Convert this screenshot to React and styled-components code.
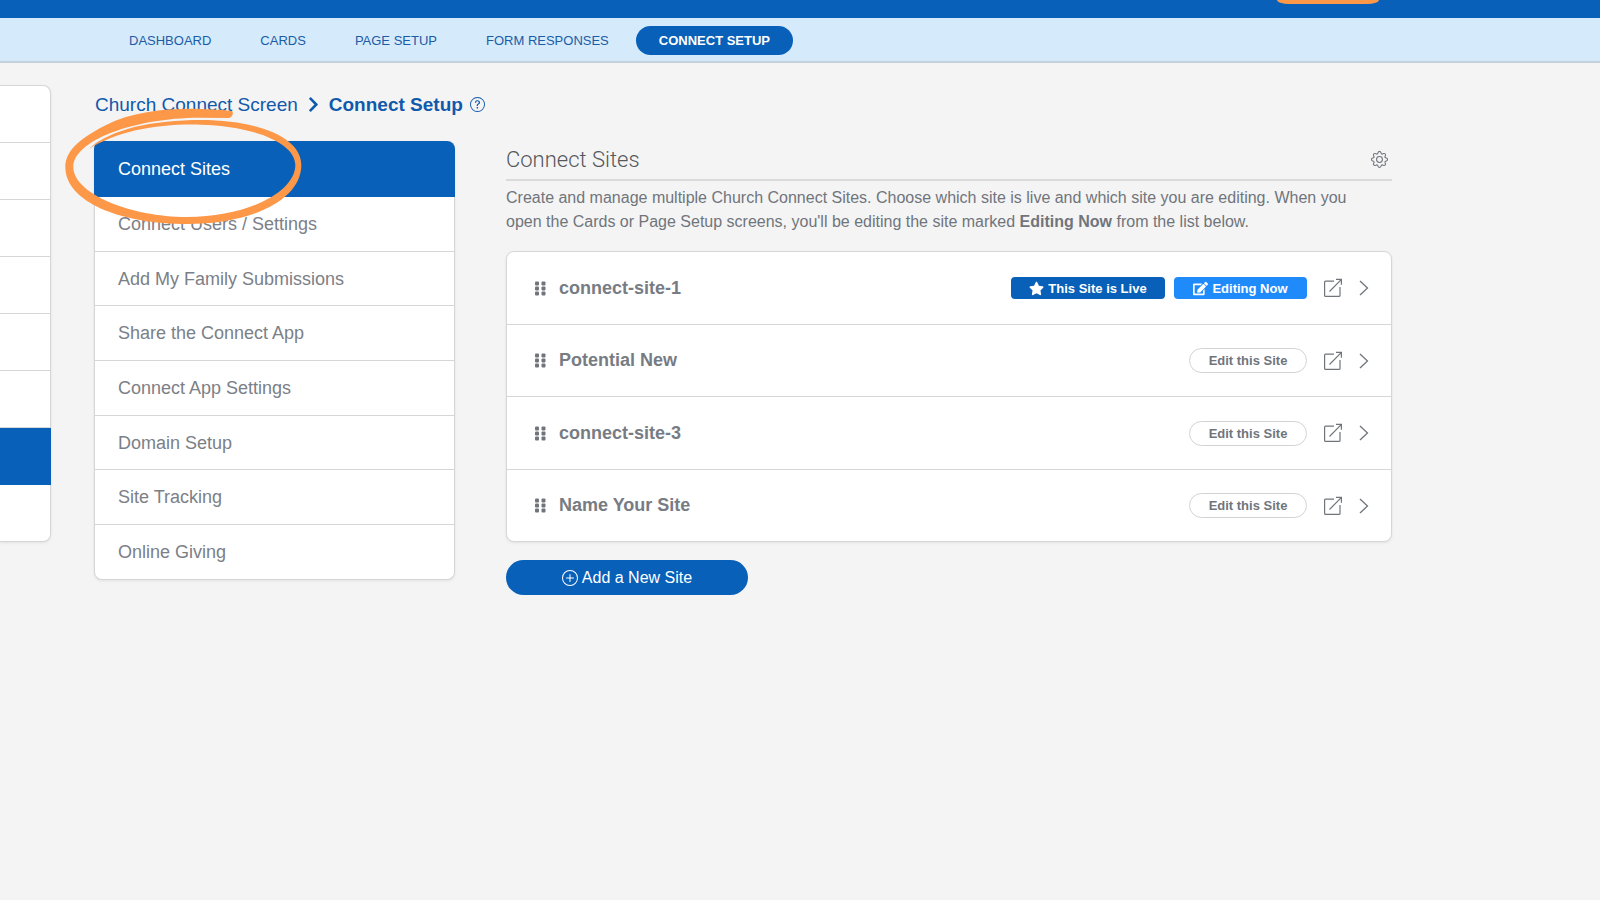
import React from 'react';
import styled, { createGlobalStyle } from 'styled-components';
import { FaStar, FaEdit, FaChevronRight } from 'react-icons/fa';
import { BsGear, BsPlusCircle, BsQuestionCircle } from 'react-icons/bs';

const navLinks = ['Dashboard', 'Cards', 'Page Setup', 'Form Responses', 'Connect Setup'];

const menuItems = [
    'Connect Sites',
    'Connect Users / Settings',
    'Add My Family Submissions',
    'Share the Connect App',
    'Connect App Settings',
    'Domain Setup',
    'Site Tracking',
    'Online Giving',
];

const sites = [
    { name: 'connect-site-1', live: true, editing: true },
    { name: 'Potential New' },
    { name: 'connect-site-3' },
    { name: 'Name Your Site' },
];

const RAIL_ROWS = 8;
const RAIL_ACTIVE = 6;

const GripIcon = () => (
    <svg width="11" height="15" viewBox="0 0 11 15" fill="currentColor" aria-hidden="true">
        {[0, 5, 10].map(y => (
            <React.Fragment key={y}>
                <rect x="0" y={y + 0.5} width="4" height="4" rx="1" />
                <rect x="6.5" y={y + 0.5} width="4" height="4" rx="1" />
            </React.Fragment>
        ))}
    </svg>
)

const OpenIcon = () => (
    <svg width="20" height="20" viewBox="0 0 20 20" fill="none" stroke="currentColor" strokeWidth="1.2" aria-hidden="true">
        <path d="M11 3.2H2.6a1 1 0 0 0-1 1v13.2a1 1 0 0 0 1 1H16a1 1 0 0 0 1-1V9" />
        <path d="M6.5 13.5L18.2 1.6M13 1.4h5.4v5.4" />
    </svg>
)

const ArrowIcon = () => (
    <svg width="10" height="16" viewBox="0 0 10 16" fill="none" stroke="currentColor" strokeWidth="1.3" aria-hidden="true">
        <path d="M1 1l7.5 7L1 15" />
    </svg>
)

const Marker = () => (
    <MarkerSvg viewBox="0 0 720 360" aria-hidden="true">
        <path d="M503 12C400 2 240 -4 122 56C40 98 4 135 4 180C4 285 170 351 369 351C560 351 712 280 712 174C712 90 580 39 410 39C270 39 140 65 75 126C160 72 280 50 410 53C560 56 694 105 694 174C694 255 550 330 369 330C200 330 28 260 28 180C28 100 210 33 405 32L495 33C508 31 509 14 503 12Z" />
    </MarkerSvg>
)

const SiteRow = ({ site }) => (
    <Row>
        <Grip aria-label={`Move ${site.name}`}><GripIcon /></Grip>
        <SiteName>{site.name}</SiteName>
        {site.live && <Badge $color="#0860b8" $width={154}><FaStar size={15} />This Site is Live</Badge>}
        {site.editing
            ? <Badge $color="#1f8bfb" $width={133}><FaEdit size={15} />Editing Now</Badge>
            : <EditButton>Edit this Site</EditButton>
        }
        <RowLink href="#open" aria-label={`Open ${site.name}`}><OpenIcon /></RowLink>
        <RowLink href="#details" aria-label={`${site.name} details`}><ArrowIcon /></RowLink>
    </Row>
)

const App = () => {
    return(
        <>
            <GlobalStyle />
            <TopBar><TopTab /></TopBar>
            <Nav>
                {navLinks.map(e => (
                    <NavLink key={e} href="#" $active={e === 'Connect Setup'}>{e}</NavLink>
                ))}
            </Nav>
            <Page>
                <Rail>
                    {Array.from({ length: RAIL_ROWS }, (_, i) => (
                        <RailRow key={i} $active={i === RAIL_ACTIVE} />
                    ))}
                </Rail>
                <Content>
                    <Breadcrumb>
                        <a href="#church">Church Connect Screen</a>
                        <FaChevronRight size={17} />
                        <strong>Connect Setup</strong>
                        <HelpButton aria-label="Help"><BsQuestionCircle size={15} /></HelpButton>
                    </Breadcrumb>
                    <Columns>
                        <Menu>
                            {menuItems.map((e, i) => (
                                <MenuItem key={e} href="#" $active={i === 0}>{e}</MenuItem>
                            ))}
                            <Marker />
                        </Menu>
                        <Main>
                            <Heading>
                                <h1>Connect Sites</h1>
                                <GearButton aria-label="Settings"><BsGear size={17} /></GearButton>
                            </Heading>
                            <Description>
                                Create and manage multiple Church Connect Sites. Choose which site is live and which site you are editing. When you open the Cards or Page Setup screens, you'll be editing the site marked <strong>Editing Now</strong> from the list below.
                            </Description>
                            <SiteList>
                                {sites.map(e => <SiteRow key={e.name} site={e} />)}
                            </SiteList>
                            <AddButton><BsPlusCircle size={16} />Add a New Site</AddButton>
                        </Main>
                    </Columns>
                </Content>
            </Page>
        </>
    )
}

const GlobalStyle = createGlobalStyle`
    * {
        box-sizing: border-box;
    }
    body {
        margin: 0;
        background-color: #f4f4f4;
        color: #70757c;
        font-family: "Liberation Sans", Arial, sans-serif;
        font-size: 16px;
    }
    a {
        color: inherit;
        text-decoration: none;
    }
    button {
        font-family: inherit;
        color: inherit;
        background: none;
        border: 0;
        padding: 0;
        cursor: pointer;
    }
`

const TopBar = styled.header`
    height: 18px;
    background-color: #0860b8;
    display: flex;
    justify-content: flex-end;
    padding-right: 221px;
`

const TopTab = styled.div`
    width: 102px;
    height: 4px;
    background-color: #fd9848;
    border-radius: 0 0 12px 12px / 0 0 4px 4px;
`

const Nav = styled.nav`
    display: flex;
    align-items: center;
    gap: 5px;
    height: 45px;
    padding: 1px 0 0 107px;
    background-color: #d5eafb;
    border-bottom: 2px solid #c3d1dc;
`

const NavLink = styled.a`
    padding: 1px ${props => props.$active ? 23 : 22}px 0;
    line-height: 28px;
    border-radius: 15px;
    font-size: 13px;
    text-transform: uppercase;
    font-weight: ${props => props.$active ? 700 : 400};
    color: ${props => props.$active ? '#fff' : '#1c5ca6'};
    background-color: ${props => props.$active ? '#0860b8' : 'transparent'};
`

const Page = styled.div`
    display: flex;
    align-items: flex-start;
    gap: 43px;
    padding: 22px 13% 40px 0;
`

const Rail = styled.aside`
    flex: none;
    width: 51px;
    background-color: #fff;
    border: 1px solid #d5d6d8;
    border-left: 0;
    border-radius: 0 8px 8px 0;
    box-shadow: 0 1px 3px rgba(0,0,0,.08);
`

const RailRow = styled.div`
    height: 57px;
    border-bottom: 1px solid #d5d6d8;

    ${props => props.$active && `
        margin-right: -1px;
        border-color: #0860b8;
        background-color: #0860b8;
    `}

    &:last-child {
        border-bottom: 0;
        height: 56px;
    }
`

const Content = styled.div`
    flex: 1;
    min-width: 0;
    padding-top: 7px;
`

const Breadcrumb = styled.div`
    display: flex;
    align-items: center;
    gap: 7px;
    height: 25px;
    padding-left: 1px;
    font-size: 19px;
    color: #1159ab;
`

const HelpButton = styled.button`
    display: flex;
`

const Columns = styled.div`
    display: flex;
    align-items: flex-start;
    gap: 51px;
    margin-top: 24px;
`

const Menu = styled.nav`
    position: relative;
    flex: none;
    width: 361px;
    background-color: #fff;
    border: 1px solid #d5d6d8;
    border-top: 0;
    border-radius: 8px;
    box-shadow: 0 1px 3px rgba(0,0,0,.08);
`

const MenuItem = styled.a`
    display: block;
    height: 55px;
    padding-left: 23px;
    line-height: 54px;
    font-size: 18px;
    color: ${props => props.$active ? '#fff' : '#7b8087'};
    background-color: ${props => props.$active ? '#0860b8' : 'transparent'};
    border-bottom: 1px solid #d5d6d8;

    &:first-child {
        height: 56px;
        line-height: 56px;
        margin: 0 -1px;
        padding-left: 24px;
        border-radius: 8px 8px 0 0;
        border-color: #0860b8;
    }

    &:nth-child(3n) {
        height: 54px;
    }

    &:nth-last-child(2) {
        height: 54px;
        border-bottom: 0;
    }
`

const MarkerSvg = styled.svg`
    position: absolute;
    top: -34px;
    left: -31px;
    width: 240px;
    height: 120px;
    fill: #fd9848;
    pointer-events: none;
`

const Main = styled.main`
    flex: 1;
    min-width: 0;
`

const Heading = styled.div`
    display: flex;
    align-items: center;
    justify-content: space-between;
    height: 40px;
    padding: 0 4px 2px 0;
    border-bottom: 2px solid #d9dadb;

    h1 {
        margin: 0;
        font-family: Roboto, "Liberation Sans", sans-serif;
        font-size: 22px;
        font-weight: 300;
        color: #55585c;
    }
`

const GearButton = styled.button`
    display: flex;
`

const Description = styled.p`
    margin: 5px 0 17px;
    padding-right: 28px;
    font-size: 16px;
    line-height: 24px;
`

const SiteList = styled.div`
    background-color: #fff;
    border: 1px solid #d5d6d8;
    border-radius: 8px;
    box-shadow: 0 1px 3px rgba(0,0,0,.08);
`

const Row = styled.div`
    display: flex;
    align-items: center;
    height: 73px;
    padding: 0 22px 0 28px;
    border-bottom: 1px solid #d5d6d8;

    &:nth-child(even) {
        height: 72px;
    }

    &:last-child {
        height: 71px;
        border-bottom: 0;
    }
`

const Grip = styled.button`
    display: flex;
    margin-right: 13px;
    cursor: grab;
`

const SiteName = styled.span`
    flex: 1;
    font-size: 18px;
    font-weight: 700;
    color: #777c84;
`

const Badge = styled.span`
    display: flex;
    align-items: center;
    justify-content: center;
    gap: 4px;
    width: ${props => props.$width}px;
    height: 22px;
    margin-left: 9px;
    border-radius: 4px;
    font-size: 13px;
    font-weight: 700;
    color: #fff;
    background-color: ${props => props.$color};
`

const EditButton = styled.button`
    width: 118px;
    height: 25px;
    border: 1px solid #d2d3d6;
    border-radius: 13px;
    font-size: 13px;
    font-weight: 700;
`

const RowLink = styled.a`
    display: flex;
    margin-left: 16px;
`

const AddButton = styled.button`
    display: flex;
    align-items: center;
    justify-content: center;
    gap: 4px;
    width: 242px;
    height: 35px;
    margin-top: 18px;
    border-radius: 18px;
    font-size: 16px;
    color: #fff;
    background-color: #0860b8;
`

export default App;
